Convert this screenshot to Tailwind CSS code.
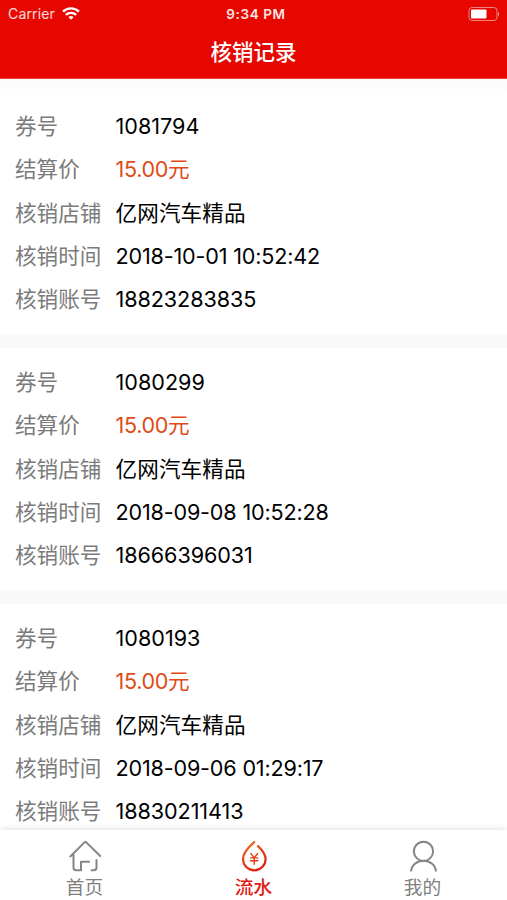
<!DOCTYPE html>
<html lang="zh-CN"><head><meta charset="utf-8"><title>核销记录</title>
<script src="https://cdn.jsdelivr.net/npm/@tailwindcss/browser@4"></script></head>
<body class="w-[507px] h-[900px] overflow-hidden flex flex-col bg-[#f9f9f9] font-['Inter','Noto_Sans_CJK_SC',sans-serif]">
<header class="h-[79px] shrink-0 bg-[#e60700] text-white border-b border-[#ec423b]">
<div class="h-[27px] grid grid-cols-3 items-center px-2 text-[13.5px]">
<div class="flex items-center gap-[7px]"><span class="text-[14px] tracking-[0.15px] text-white/85">Carrier</span>
<svg class="w-[18px] h-[13px]" viewBox="0 0 18 13" fill="none" stroke="white" stroke-width="2.3"><path d="M1 4.7a11.5 11.5 0 0 1 16 0M3.8 7.9a7.5 7.5 0 0 1 10.4 0"/><path d="M9 12.8L6.4 10.2a4 4 0 0 1 5.2 0z" fill="white" stroke="none"/></svg></div>
<div class="text-center font-semibold whitespace-nowrap pl-[5px] pt-px tracking-[0.6px] text-white/90">9:34 PM</div>
<div class="flex justify-end"><svg class="w-[31px] h-[14px]" viewBox="0 0 31 14"><rect x="1" y=".5" width="28" height="13" rx="3.2" fill="none" stroke="white" stroke-opacity=".5"/><rect x="3" y="2.5" width="15.5" height="9" rx="1" fill="white"/><path d="M30 4.5q1 1 1 2.5t-1 2.5z" fill="white" fill-opacity=".6"/></svg></div>
</div>
<h1 class="text-center text-[21.5px] leading-[50px] font-medium">核销记录</h1>
</header>
<main id="list" class="flex-1 min-h-0 overflow-hidden flex flex-col gap-[14px]"></main>
<template id="card"><section class="shrink-0 h-[242px] bg-white pt-[13px] px-[15px] text-[21.6px] leading-[43.2px] whitespace-nowrap first:h-[255px] first:pt-[26px] first:bg-linear-to-b first:from-[#fafafa] first:to-white first:to-[18px]"><dl class="grid grid-cols-[100.5px_1fr] text-black">
<dt class="text-[#7b7b7b]">券号</dt><dd></dd>
<dt class="text-[#7b7b7b]">结算价</dt><dd class="tracking-[-0.35px] text-[#e04a16]">15.00元</dd>
<dt class="text-[#7b7b7b] relative top-px">核销店铺</dt><dd class="relative top-px tracking-[0.1px]">亿网汽车精品</dd>
<dt class="text-[#7b7b7b]">核销时间</dt><dd class="tracking-[-0.18px]"></dd>
<dt class="text-[#7b7b7b]">核销账号</dt><dd class="tracking-[-0.08px]"></dd></dl></section></template>
<footer class="h-[70px] shrink-0 relative bg-white shadow-[0_-1px_6px_rgba(0,0,0,0.12)] grid grid-cols-3 text-[18.7px] text-[#808080]">
<div class="flex flex-col items-center pt-[9px]">
<svg class="w-[34px] h-[34px]" viewBox="0 0 34 34" fill="none" stroke="#858585" stroke-width="2" stroke-linecap="round" stroke-linejoin="round"><path d="M2.3 17.5L16.2 3.6q1.2-1.2 2.4 0L32.2 17M5.5 16v12.5q0 2.8 2.8 2.8H13v-8.5h8M23.5 31.3h2.2q2.8 0 2.8-2.8V21"/></svg>
<span class="leading-[30px]">首页</span></div>
<div class="flex flex-col items-center pt-[9px] text-[#df1a12] font-medium">
<svg class="w-[34px] h-[34px]" viewBox="0 0 34 34" fill="none" stroke="url(#drop)" stroke-width="2.2" stroke-linecap="round" stroke-linejoin="round"><defs><linearGradient id="drop" gradientUnits="userSpaceOnUse" x1="8" y1="3" x2="23" y2="31"><stop stop-color="#ef6a1d"/><stop offset="1" stop-color="#d91e18"/></linearGradient></defs><path d="M17.2 3.2C11.5 8.2 6 14 6 20a11.3 11.3 0 0 0 22.6 0c0-4.8-3.7-9.3-7.6-12.9"/><path d="M13.8 14.5l3.4 4.3 3.4-4.3M13.6 18.9h7.2M13.6 21.8h7.2M17.2 19v6.2" stroke-width="1.4"/></svg>
<span class="leading-[30px]">流水</span></div>
<div class="flex flex-col items-center pt-[9px]">
<svg class="w-[34px] h-[34px]" viewBox="0 0 34 34" fill="none" stroke="#858585" stroke-width="2"><circle cx="17.5" cy="12.3" r="9.6"/><path d="M5.1 32.5C5.4 26.3 11 21.7 17.5 21.7S29.7 26.3 30 32.5"/></svg>
<span class="leading-[30px]">我的</span></div>
</footer>
<script>
[['1081794','2018-10-01 10:52:42','18823283835'],['1080299','2018-09-08 10:52:28','18666396031'],['1080193','2018-09-06 01:29:17','18830211413']].forEach(r=>{const n=document.getElementById('card').content.cloneNode(true),d=n.querySelectorAll('dd');d[0].textContent=r[0];d[3].textContent=r[1];d[4].textContent=r[2];document.getElementById('list').append(n)});
</script></body></html>
